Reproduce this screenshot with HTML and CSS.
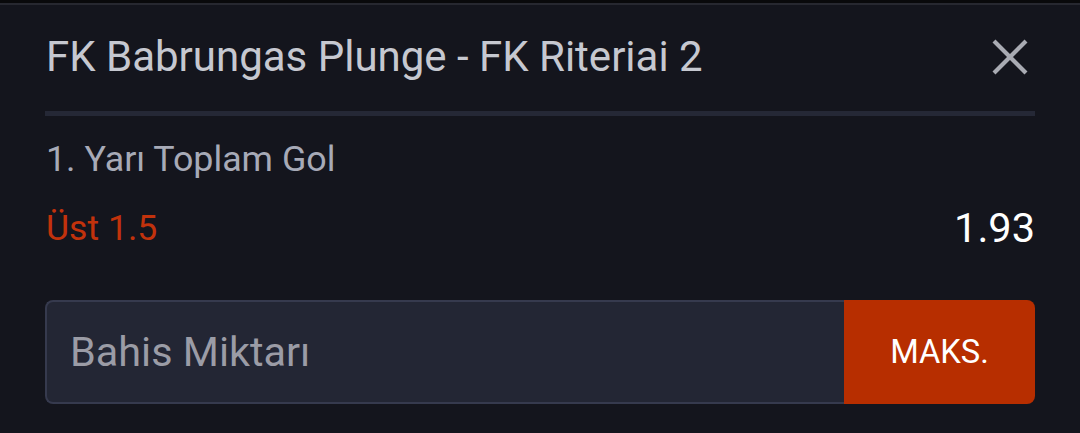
FILE: index.html
```html
<!DOCTYPE html>
<html lang="tr">
<head>
<meta charset="utf-8">
<link rel="stylesheet" href="styles.css">
</head>
<body>
<div class="topbar"></div>
<div class="sheet">
  <div class="header">
    <div class="title">FK Babrungas Plunge - FK Riteriai 2</div>
    <svg class="close" width="36" height="36" viewBox="0 0 36 36"><path d="M2 2 L34 34 M34 2 L2 34" stroke="#a9abb3" stroke-width="4.2" fill="none"/></svg>
  </div>
  <div class="divider"></div>
  <div class="market">1. Yarı Toplam Gol</div>
  <div class="selection">
    <span class="pick">Üst 1.5</span>
    <span class="odds">1.93</span>
  </div>
  <div class="stake">
    <input class="amount" type="text" placeholder="Bahis Miktarı">
    <button class="max">MAKS.</button>
  </div>
</div>
</body>
</html>
```
FILE: styles.css
```css
html, body {
  margin: 0;
  padding: 0;
  background: #14151d;
  font-family: Roboto, "Noto Sans", sans-serif;
}
.topbar {
  height: 3px;
  background: #09090b;
  border-bottom: 2px solid #272830;
}
.sheet {
  padding: 0 45px;
}
.header {
  display: flex;
  align-items: center;
  justify-content: space-between;
  padding: 27px 7px 30px 1px;
}
.title {
  font-size: 42px;
  line-height: 49px;
  color: #c6c8d0;
}
.close {
  display: block;
}
.divider {
  height: 5px;
  background: #252836;
}
.market {
  margin-top: 22px;
  padding-left: 1px;
  font-size: 35.8px;
  line-height: 42px;
  color: #a7aab7;
}
.selection {
  margin-top: 24px;
  display: flex;
  align-items: center;
  justify-content: space-between;
  height: 47px;
}
.pick {
  font-size: 35.6px;
  color: #c2320c;
  padding-left: 1px;
}
.odds {
  font-size: 41.5px;
  color: #ffffff;
}
.stake {
  margin-top: 49px;
  display: flex;
  height: 104px;
}
.amount {
  flex: 1;
  min-width: 0;
  box-sizing: border-box;
  height: 104px;
  margin: 0;
  border: 2px solid #363a4e;
  border-right: none;
  border-radius: 8px 0 0 8px;
  background: #232634;
  padding: 0 0 0 23px;
  font-family: Roboto, sans-serif;
  font-size: 41.4px;
  color: #ffffff;
  outline: none;
}
.amount::placeholder {
  color: #9b9ca6;
  opacity: 1;
}
.max {
  width: 191px;
  height: 104px;
  margin: 0;
  border: none;
  border-radius: 0 8px 8px 0;
  background: #b72e00;
  color: #ffffff;
  font-family: Roboto, sans-serif;
  font-size: 32.7px;
  padding: 0;
}
```
